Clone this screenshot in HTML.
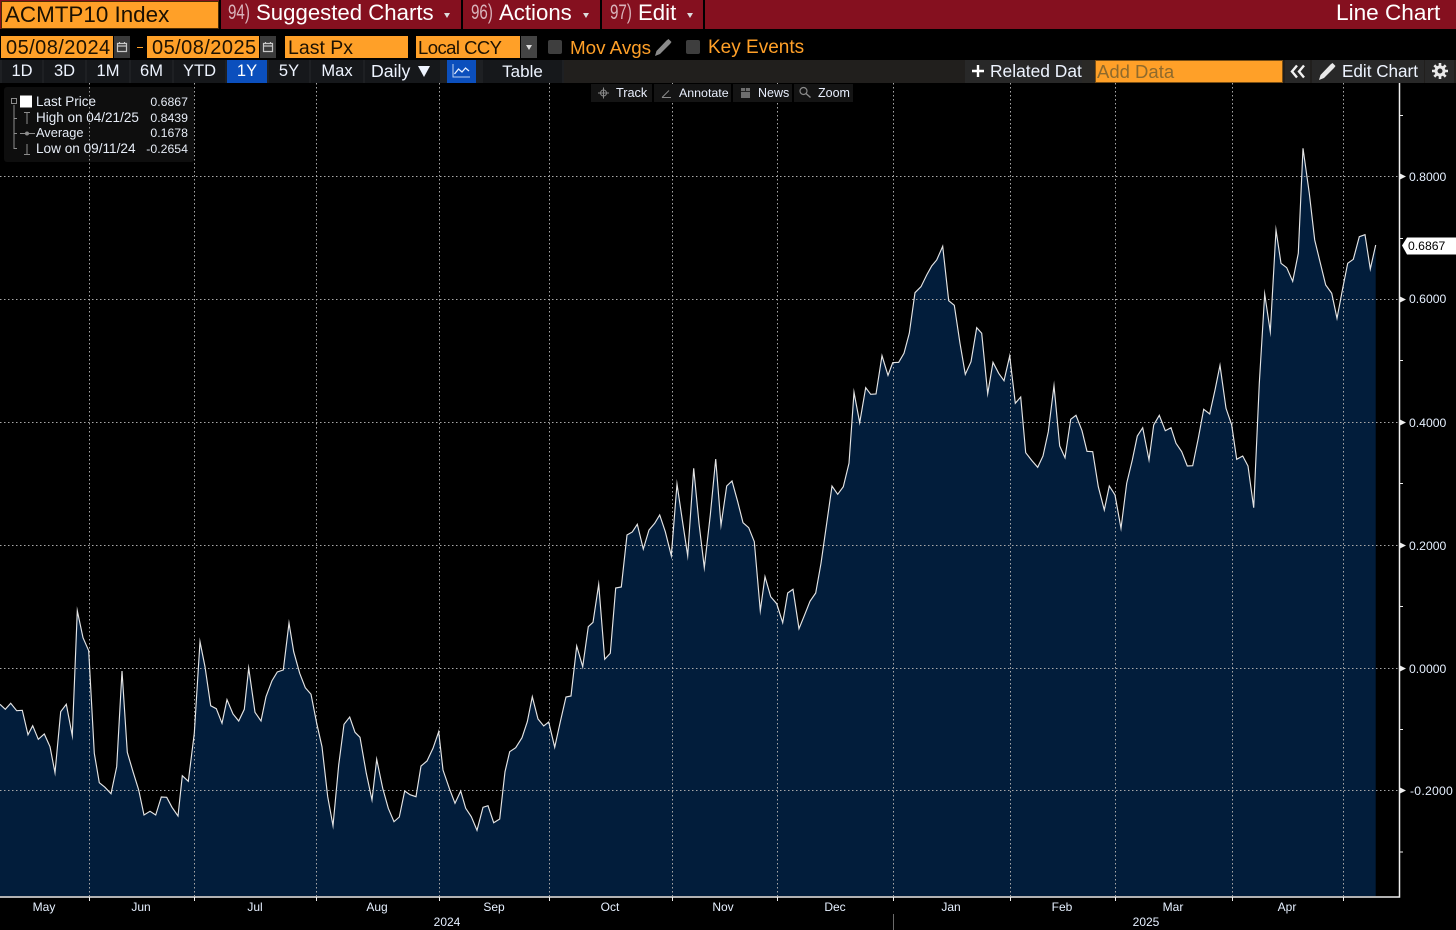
<!DOCTYPE html>
<html><head><meta charset="utf-8"><title>Line Chart</title>
<style>
html,body{margin:0;padding:0;background:#000;}
body{width:1456px;height:930px;position:relative;overflow:hidden;font-family:"Liberation Sans",sans-serif;color:#fff;}
.a{position:absolute;white-space:nowrap;}
.bar{left:0;top:0;width:1456px;height:29px;background:#85101f;}
.sep{top:0;width:2px;height:29px;background:#000;}
.t{font-size:22.2px;line-height:28px;top:-1px;color:#fff;}
.n{font-size:21px;line-height:28px;top:-1px;color:#d9b3bb;transform:scaleX(.72);transform-origin:0 50%;}
.car{width:0;height:0;border-left:3.5px solid transparent;border-right:3.5px solid transparent;border-top:5px solid #ddd;top:13px;}
.of{background:#ffa028;color:#1d1202;height:22px;top:36px;font-size:20px;line-height:24px;}
.cal{background:#3a3a3a;top:36px;height:22px;width:16px;}
.lbl{color:#ffa028;font-size:19px;line-height:23px;top:36px;}
.cb{background:#3e3e3e;border-radius:2px;width:14px;height:14px;top:40px;}
.tb{left:0;top:60px;width:1456px;height:23px;background:#211f1d;}
.b{background:#16181b;top:60px;height:23px;text-align:center;font-size:16.5px;line-height:23px;color:#eef4ff;}
.act{background:#0b4fbd;}
.r{background:#282828;}
.tool{background:#141414;top:84px;height:18px;font-size:12.5px;line-height:18px;color:#e8eefc;}
.lg{left:4px;top:87px;width:190px;height:75px;background:#0e0e0e;border-radius:3px;}
.lt{font-size:13.3px;line-height:16px;color:#e6ecf6;}
.v{font-size:12.3px;line-height:16px;color:#e6ecf6;right:1268px;}
.ax{font-size:12.2px;line-height:14px;color:#e6f0ff;}
.m{font-size:12px;line-height:14px;color:#e6f0ff;transform:translateX(-50%);}
</style></head>
<body>
<div class="a bar"></div>
<div class="a" style="left:1px;top:1px;width:216px;height:26px;background:#ffa028;border:1px solid #4a2c05;"></div>
<div class="a" style="left:5px;top:0;font-size:22.4px;line-height:29px;color:#1a1002;">ACMTP10 Index</div>
<div class="a sep" style="left:219px"></div>
<div class="a n" style="left:228px">94)</div><div class="a t" style="left:256px">Suggested Charts</div><div class="a car" style="left:444px"></div>
<div class="a sep" style="left:461px"></div>
<div class="a n" style="left:471px">96)</div><div class="a t" style="left:499px">Actions</div><div class="a car" style="left:583px"></div>
<div class="a sep" style="left:600px"></div>
<div class="a n" style="left:610px">97)</div><div class="a t" style="left:638px">Edit</div><div class="a car" style="left:687px"></div>
<div class="a sep" style="left:703px"></div>
<div class="a t" style="left:1336px;font-size:22.6px">Line Chart</div>

<div class="a of" style="left:1px;width:112px;"><span style="margin-left:5px;letter-spacing:.45px">05/08/2024</span></div>
<div class="a cal" style="left:114px"></div>
<svg class="a" style="left:116px;top:41px" width="12" height="12" viewBox="0 0 12 12"><path d="M1.5 2.5h9v8h-9zM1.5 5h9M3.5 1v2M8.5 1v2" fill="none" stroke="#c8c8c8" stroke-width="1.2"/></svg>
<div class="a" style="left:137px;top:46.5px;width:6px;height:1.5px;background:#ffa028"></div>
<div class="a of" style="left:147px;width:112px;"><span style="margin-left:5px;letter-spacing:.45px">05/08/2025</span></div>
<div class="a cal" style="left:260px"></div>
<svg class="a" style="left:262px;top:41px" width="12" height="12" viewBox="0 0 12 12"><path d="M1.5 2.5h9v8h-9zM1.5 5h9M3.5 1v2M8.5 1v2" fill="none" stroke="#c8c8c8" stroke-width="1.2"/></svg>
<div class="a of" style="left:285px;width:123px;"><span style="margin-left:3px;font-size:19.5px">Last Px</span></div>
<div class="a of" style="left:416px;width:104px;"><span style="margin-left:2px;font-size:18.5px;letter-spacing:-.55px">Local CCY</span></div>
<div class="a" style="left:521px;top:36px;width:16px;height:22px;background:#444"></div>
<div class="a" style="left:526px;top:45px;width:0;height:0;border-left:3.5px solid transparent;border-right:3.5px solid transparent;border-top:5px solid #ddd"></div>
<div class="a cb" style="left:548px"></div>
<div class="a lbl" style="left:570px;font-size:18.8px">Mov Avgs</div>
<svg class="a" style="left:654px;top:38px" width="19" height="19" viewBox="0 0 19 19"><path d="M1 18l1.5-5L12.5 2.5l2-1.5 3 3-1.5 2L6 16z" fill="#8a8a8a"/></svg>
<div class="a cb" style="left:686px"></div>
<div class="a lbl" style="left:708px;font-size:19px">Key Events</div>

<div class="a tb"></div>
<div class="a" style="left:0;top:60px;width:564px;height:23px;background:#1e2023"></div>
<div class="a b" style="left:2px;width:40px">1D</div>
<div class="a b" style="left:44px;width:41px">3D</div>
<div class="a b" style="left:87px;width:42px">1M</div>
<div class="a b" style="left:131px;width:41px">6M</div>
<div class="a b" style="left:174px;width:51px">YTD</div>
<div class="a b act" style="left:227px;width:40px;color:#fff">1Y</div>
<div class="a b" style="left:269px;width:40px">5Y</div>
<div class="a b" style="left:311px;width:52px">Max</div>
<div class="a b" style="left:365px;width:75px;text-align:left"><span style="margin-left:6px;font-size:17.7px">Daily</span></div>
<div class="a" style="left:418px;top:66px;width:0;height:0;border-left:6px solid transparent;border-right:6px solid transparent;border-top:11px solid #eef4ff"></div>
<div class="a b act" style="left:447px;width:29px"></div>
<svg class="a" style="left:452px;top:63px" width="19" height="16" viewBox="0 0 19 16"><path d="M1 1v13h17" fill="none" stroke="#bcd0f0" stroke-width="1"/><path d="M2.5 11l4-5 3.500 3 3.500-4 3.500 3" fill="none" stroke="#e8f0ff" stroke-width="1.3"/></svg>
<div class="a b" style="left:483px;width:79px;font-size:17px">Table</div>

<div class="a b r" style="left:965px;width:117px;text-align:left"></div>
<svg class="a" style="left:971px;top:64px" width="14" height="14" viewBox="0 0 14 14"><path d="M7 1v12M1 7h12" stroke="#fff" stroke-width="2.4"/></svg>
<div class="a" style="left:990px;top:60px;width:92px;overflow:hidden;font-size:17.4px;line-height:23px;color:#eef4ff">Related Data</div>
<div class="a" style="left:1082px;top:60px;width:13px;height:23px;background:#2a2926"></div>
<div class="a" style="left:1095px;top:60px;width:186px;height:21px;background:#ffa028;border:1px solid #7a4f14;font-size:18.5px;line-height:22px;color:#8f6a2c;text-indent:1px;">Add Data</div>
<div class="a b r" style="left:1285px;width:25px"></div>
<svg class="a" style="left:1290px;top:64px" width="16" height="15" viewBox="0 0 16 15"><path d="M7 1.500L2 7.500l5 6M14 1.500L9 7.500l5 6" fill="none" stroke="#f2f2f2" stroke-width="2.4"/></svg>
<div class="a b r" style="left:1312px;width:112px"></div>
<svg class="a" style="left:1318px;top:62px" width="19" height="19" viewBox="0 0 19 19"><path d="M1 18l1.500-5L12.500 2.500l2-1.500 3 3-1.500 2L6 16z" fill="#e8e8e8"/></svg>
<div class="a" style="left:1342px;top:60px;font-size:17.1px;line-height:23px;color:#eef4ff">Edit Chart</div>
<div class="a b r" style="left:1425px;width:29px"></div>
<svg class="a" style="left:1431px;top:62px" width="18" height="18" viewBox="0 0 18 18"><circle cx="9" cy="9" r="4" fill="none" stroke="#e8e8e8" stroke-width="3"/><path d="M9 1v3M9 14v3M1 9h3M14 9h3M3.300 3.300l2.200 2.200M12.500 12.500l2.200 2.200M14.700 3.300l-2.200 2.200M5.500 12.500l-2.200 2.200" stroke="#e8e8e8" stroke-width="2.6"/></svg>

<svg class="a" style="left:0;top:0" width="1456" height="930" viewBox="0 0 1456 930">
<path fill="#021d3b" d="M0,896V704.3L5.3,709.3L10.7,703.3L16.7,710.7L22.3,710.3L28,734.7L32.7,725.7L38.3,739.3L44.3,734L50,746.7L55,772.7L60.7,711.7L66.3,704.3L72.3,735.7L77.3,610.7L83,637.7L88.7,650.7L94.3,753.3L99.3,782.7L105,787.3L111,793.7L116.7,766.7L122,671L127.3,752.3L133,771.7L138.7,790L144,815L150,811.3L155.7,815L161.3,797L166.7,797.3L172,807.3L178,816L182.3,775.7L188.3,781.3L194.3,733.3L200,641.7L205,666.7L210.7,705.7L216.3,708.7L222,723.3L227,699.7L233,714L238.7,721L244.3,709.3L248.7,668L255,712.3L261,721L266,696.7L272,680.7L277.3,672L283.3,670L289,623L293.7,651.7L299.7,673.3L305.3,687.7L311,694.3L316.7,723.3L322,746.7L327.7,796.7L333,825.7L338.7,765L344,724.3L349.7,717L355,732.3L360,737.3L366.3,773.3L372,800L376.7,759.3L382.7,788.3L388.3,808.3L394,821.7L399.3,817L404.7,791L410,794.7L416,796.7L421,766L427,761L433,748.3L438.7,731.7L443,770L449.3,788.3L455,803.3L460.7,791L465.7,808.3L471.3,816.7L477,830.3L483,807.3L488,805.7L493.7,822.7L499.7,819L505,771.7L509.7,751.7L515.7,747.7L522,737.7L527.3,721.7L532.3,696.7L538,719L543.7,726L548.7,722L554.7,747.3L560.3,721.7L566,697L571,696L576.7,646L582.7,666.7L588.3,626.7L593,622.3L598.7,584.3L604.7,659.3L610.3,653.3L615.7,588L621.3,587L627,535L632.3,532L637.3,524.3L643.3,549L649,530L654.7,523.3L659.7,515L665.3,531.7L671.3,555.7L677,484L682.3,520L687.7,555.7L693.7,468.3L699,523.3L704.3,567.7L710.3,515L715.7,459L721,525.3L726.7,486L732,481L737.7,501.7L743,522.7L748.7,527.7L754.3,541.7L760.3,610.7L765,576.7L770.7,596.7L776.7,603.7L782.7,622.7L787.7,593L793,589.3L799,628.7L804.3,615.7L810,601.3L815.7,593L821,563.3L826.7,523.3L832,486L837.7,494.3L843.3,486.7L849,463.3L854,392.3L859.7,422.7L865.7,387.7L870.7,394.3L876,394L882,355.7L888,375.3L892.7,362.7L898.7,362.3L904,353.3L909.3,333.3L915,292.7L921,286.7L926.7,275L931.7,266L936.7,260L942.7,246.3L948.7,300.7L954.3,305.3L960,343.3L965.3,374.3L971,361.7L976.7,327.7L981.7,333.3L987.7,393.7L993,362.3L998.7,373.3L1004,380.7L1009.7,356L1015.3,403.3L1020.7,397L1025.7,452.7L1032,460.7L1037.7,467.3L1043,456L1048.3,431.7L1054,385.7L1059.7,446L1065,457.7L1070.7,419.3L1076,415.3L1082,430.7L1087,451.3L1092.7,451.7L1098.3,486.7L1104.3,510L1109.3,486L1115,495L1121,528.3L1126.7,483.3L1132.3,460L1137.3,436L1142.7,427.7L1149,460L1153.7,425L1159.3,415.3L1165.3,430.7L1171,427.7L1176,443.3L1181.7,451.7L1187.3,466L1192.7,465.7L1198.3,438.3L1203.7,409.3L1209.7,414L1215,390L1220,365.3L1226,408.3L1231.7,425L1236.7,459.3L1242.7,456L1248,466L1253.7,507.7L1259.3,383.3L1264.7,294L1270.3,331.7L1276,230L1281,263.3L1286.7,267.7L1292.7,281.3L1298.3,253.3L1303,148.3L1309.3,193.3L1314.7,240L1320,261.7L1325.7,285L1331.7,293.3L1337,318.3L1342.7,288.3L1347.7,263.3L1353.3,259.3L1359.3,236.7L1365,234.7L1370.3,269L1375.7,245V896Z"/>
<g stroke="#a8a8a8" stroke-width="1" stroke-dasharray="1.5 2.5" fill="none">
<path d="M0 176.5H1399M0 299.5H1399M0 422.5H1399M0 545.5H1399M0 668.5H1399M0 790.5H1399"/>
<path d="M89.5 83V896M194.5 83V896M316.5 83V896M439.5 83V896M549.5 83V896M672.5 83V896M777.5 83V896M893.5 83V896M1010.5 83V896M1115.5 83V896M1232.5 83V896M1343.5 83V896"/>
</g>
<path fill="none" stroke="#e4e4e4" stroke-width="1.15" stroke-linejoin="miter" stroke-miterlimit="10" d="M0,704.3L5.3,709.3L10.7,703.3L16.7,710.7L22.3,710.3L28,734.7L32.7,725.7L38.3,739.3L44.3,734L50,746.7L55,772.7L60.7,711.7L66.3,704.3L72.3,735.7L77.3,610.7L83,637.7L88.7,650.7L94.3,753.3L99.3,782.7L105,787.3L111,793.7L116.7,766.7L122,671L127.3,752.3L133,771.7L138.7,790L144,815L150,811.3L155.7,815L161.3,797L166.7,797.3L172,807.3L178,816L182.3,775.7L188.3,781.3L194.3,733.3L200,641.7L205,666.7L210.7,705.7L216.3,708.7L222,723.3L227,699.7L233,714L238.7,721L244.3,709.3L248.7,668L255,712.3L261,721L266,696.7L272,680.7L277.3,672L283.3,670L289,623L293.7,651.7L299.7,673.3L305.3,687.7L311,694.3L316.7,723.3L322,746.7L327.7,796.7L333,825.7L338.7,765L344,724.3L349.7,717L355,732.3L360,737.3L366.3,773.3L372,800L376.7,759.3L382.7,788.3L388.3,808.3L394,821.7L399.3,817L404.7,791L410,794.7L416,796.7L421,766L427,761L433,748.3L438.7,731.7L443,770L449.3,788.3L455,803.3L460.7,791L465.7,808.3L471.3,816.7L477,830.3L483,807.3L488,805.7L493.7,822.7L499.7,819L505,771.7L509.7,751.7L515.7,747.7L522,737.7L527.3,721.7L532.3,696.7L538,719L543.7,726L548.7,722L554.7,747.3L560.3,721.7L566,697L571,696L576.7,646L582.7,666.7L588.3,626.7L593,622.3L598.7,584.3L604.7,659.3L610.3,653.3L615.7,588L621.3,587L627,535L632.3,532L637.3,524.3L643.3,549L649,530L654.7,523.3L659.7,515L665.3,531.7L671.3,555.7L677,484L682.3,520L687.7,555.7L693.7,468.3L699,523.3L704.3,567.7L710.3,515L715.7,459L721,525.3L726.7,486L732,481L737.7,501.7L743,522.7L748.7,527.7L754.3,541.7L760.3,610.7L765,576.7L770.7,596.7L776.7,603.7L782.7,622.7L787.7,593L793,589.3L799,628.7L804.3,615.7L810,601.3L815.7,593L821,563.3L826.7,523.3L832,486L837.7,494.3L843.3,486.7L849,463.3L854,392.3L859.7,422.7L865.7,387.7L870.7,394.3L876,394L882,355.7L888,375.3L892.7,362.7L898.7,362.3L904,353.3L909.3,333.3L915,292.7L921,286.7L926.7,275L931.7,266L936.7,260L942.7,246.3L948.7,300.7L954.3,305.3L960,343.3L965.3,374.3L971,361.7L976.7,327.7L981.7,333.3L987.7,393.7L993,362.3L998.7,373.3L1004,380.7L1009.7,356L1015.3,403.3L1020.7,397L1025.7,452.7L1032,460.7L1037.7,467.3L1043,456L1048.3,431.7L1054,385.7L1059.7,446L1065,457.7L1070.7,419.3L1076,415.3L1082,430.7L1087,451.3L1092.7,451.7L1098.3,486.7L1104.3,510L1109.3,486L1115,495L1121,528.3L1126.7,483.3L1132.3,460L1137.3,436L1142.7,427.7L1149,460L1153.7,425L1159.3,415.3L1165.3,430.7L1171,427.7L1176,443.3L1181.7,451.7L1187.3,466L1192.7,465.7L1198.3,438.3L1203.7,409.3L1209.7,414L1215,390L1220,365.3L1226,408.3L1231.7,425L1236.7,459.3L1242.7,456L1248,466L1253.7,507.7L1259.3,383.3L1264.7,294L1270.3,331.7L1276,230L1281,263.3L1286.7,267.7L1292.7,281.3L1298.3,253.3L1303,148.3L1309.3,193.3L1314.7,240L1320,261.7L1325.7,285L1331.7,293.3L1337,318.3L1342.7,288.3L1347.7,263.3L1353.3,259.3L1359.3,236.7L1365,234.7L1370.3,269L1375.7,245"/>
<g stroke="#eee" fill="none">
<path d="M0 897H1399.5V83" stroke-width="1.5"/>
<path d="M89.5 897v4M194.5 897v4M316.5 897v4M439.5 897v4M549.5 897v4M672.5 897v4M777.5 897v4M893.5 897v4M1010.5 897v4M1115.5 897v4M1232.5 897v4M1343.5 897v4" stroke-width="1"/>
<path d="M1399 115.5h4M1399 238.5h4M1399 360.5h4M1399 483.5h4M1399 606.5h4M1399 729.5h4M1399 852h4" stroke-width="1"/>
</g>
<path fill="#eee" d="M1399 173l7 3.500-7 3.500zM1399 296l7 3.500-7 3.500zM1399 419l7 3.500-7 3.500zM1399 542l7 3.500-7 3.500zM1399 665l7 3.500-7 3.500zM1399 787l7 3.500-7 3.500z"/>
<path d="M893.500 914V930" stroke="#6a6a6a" stroke-width="1"/>
<path fill="#fff" d="M1402 245.500l5-8h49v17h-49z"/>
</svg>

<div class="a ax" style="left:1409px;top:169.500px">0.8000</div>
<div class="a ax" style="left:1409px;top:292px">0.6000</div>
<div class="a ax" style="left:1409px;top:416px">0.4000</div>
<div class="a ax" style="left:1409px;top:539px">0.2000</div>
<div class="a ax" style="left:1409px;top:661.500px">0.0000</div>
<div class="a ax" style="left:1410px;top:784px;letter-spacing:.25px">-0.2000</div>
<div class="a ax" style="left:1408px;top:239px;color:#000">0.6867</div>

<div class="a m" style="left:44px;top:900px">May</div>
<div class="a m" style="left:141px;top:900px">Jun</div>
<div class="a m" style="left:255px;top:900px">Jul</div>
<div class="a m" style="left:377px;top:900px">Aug</div>
<div class="a m" style="left:494px;top:900px">Sep</div>
<div class="a m" style="left:610px;top:900px">Oct</div>
<div class="a m" style="left:723px;top:900px">Nov</div>
<div class="a m" style="left:835px;top:900px">Dec</div>
<div class="a m" style="left:951px;top:900px">Jan</div>
<div class="a m" style="left:1062px;top:900px">Feb</div>
<div class="a m" style="left:1173px;top:900px">Mar</div>
<div class="a m" style="left:1287px;top:900px">Apr</div>
<div class="a m" style="left:447px;top:915px">2024</div>
<div class="a m" style="left:1146px;top:915px">2025</div>

<div class="a tool" style="left:591px;width:61px"><span class="a" style="left:25px;font-size:12.7px">Track</span></div>
<div class="a tool" style="left:654px;width:77px"><span class="a" style="left:25px;font-size:12.4px">Annotate</span></div>
<div class="a tool" style="left:733px;width:59px"><span class="a" style="left:25px;">News</span></div>
<div class="a tool" style="left:794px;width:59px"><span class="a" style="left:24px;">Zoom</span></div>
<svg class="a" style="left:591px;top:84px" width="270" height="18" viewBox="591 84 270 18">
<g fill="none" stroke="#8a8a8a" stroke-width="1">
<circle cx="603.500" cy="93" r="3"/><path d="M603.500 87.500v11M598 93h11"/>
<path d="M662 97.500h9M662 97.500l7-7" />
<circle cx="803.500" cy="91" r="3.500" stroke-width="1.200"/><path d="M806 93.500l4.500 4" stroke-width="1.400"/>
</g>
<path fill="#6e6e6e" d="M741 88h9v10h-9z"/><path d="M741 91.500h9" stroke="#242424"/><path d="M745.500 88v3.500" stroke="#242424"/>
</svg>

<div class="a lg"></div>
<svg class="a" style="left:0;top:84px" width="200" height="80" viewBox="0 84 200 80">
<path d="M89.500 87V162" stroke="#9a9a9a" stroke-dasharray="1.500 2.500"/>
<rect x="20" y="95.500" width="12" height="12" fill="#fff"/>
<g fill="none" stroke="#8c8c8c" stroke-width="1">
<rect x="11.500" y="98.500" width="5" height="5"/>
<path d="M14 105V148.500H17M14 118.500h3M14 133.500h3"/>
<path d="M24 112.500h6M27 112.500V124M20 133.500h15M24 154.500h6M27 144V154.500"/>
<circle cx="27" cy="133.500" r="1.500" fill="#8c8c8c"/>
</g>
</svg>
<div class="a lt" style="left:36px;top:94px;font-size:13.5px">Last Price</div>
<div class="a lt" style="left:36px;top:110px;font-size:13.5px">High on 04/21/25</div>
<div class="a lt" style="left:36px;top:125px;font-size:12.8px">Average</div>
<div class="a lt" style="left:36px;top:141px;font-size:13.6px">Low on 09/11/24</div>
<div class="a v" style="top:94px">0.6867</div>
<div class="a v" style="top:110px">0.8439</div>
<div class="a v" style="top:125px">0.1678</div>
<div class="a v" style="top:141px">-0.2654</div>
</body></html>
